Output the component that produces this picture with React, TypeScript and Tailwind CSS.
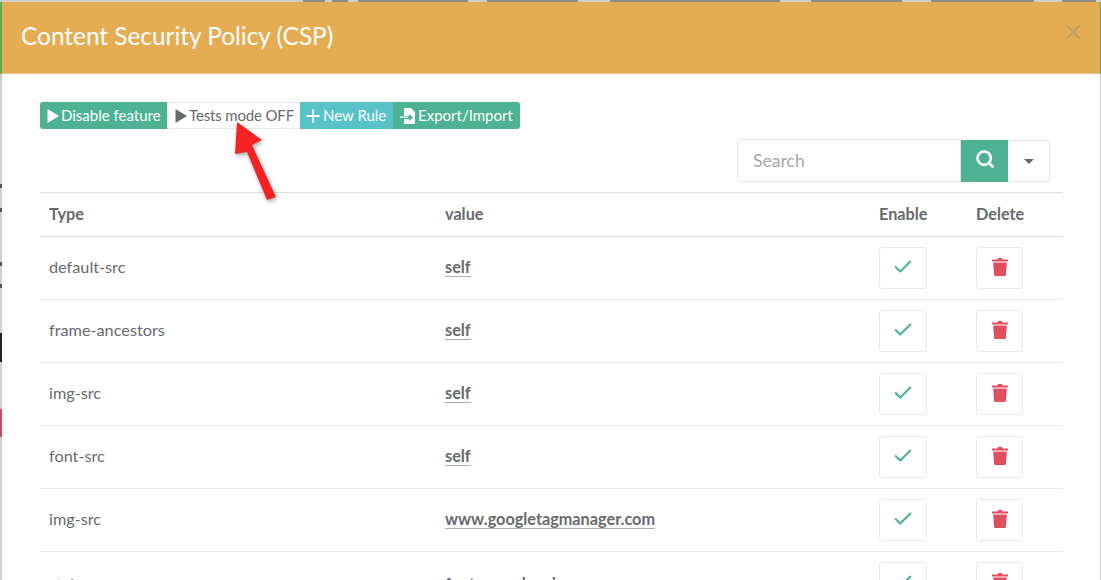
import { Check, Plus, Search, X } from "lucide-react";

const rows = [
  { type: "default-src", value: "self" },
  { type: "frame-ancestors", value: "self" },
  { type: "img-src", value: "self" },
  { type: "font-src", value: "self" },
  { type: "img-src", value: "www.googletagmanager.com" },
  { type: "style-src", value: "fonts.googleapis.com" },
];

// bits of the page behind the modal, along the top edge
const topBits = [
  { left: 303, width: 22 },
  { left: 332, width: 16 },
  { left: 358, width: 110 },
  { left: 487, width: 91 },
  { left: 610, width: 170 },
  { left: 811, width: 91 },
  { left: 931, width: 103 },
  { left: 1062, width: 34 },
];

const Play = ({ className }: { className: string }) => (
  <svg viewBox="0 0 12 14" className={className} fill="currentColor">
    <path d="M0.5 0 L12 7 L0.5 14 Z" />
  </svg>
);

const FileImport = () => (
  <svg viewBox="0 0 16 16" className="mr-[2px] h-4 w-4" fill="white">
    <path d="M4 0h7l4 4v12H4v-5h5v2l4-3.5L9 6v2H4z" />
    <path d="M0 8.6h8v1.2H0z" />
  </svg>
);

const Bin = () => (
  <svg viewBox="0 0 16 18" className="mb-[2px] h-[18px] w-4" fill="#e04f5f">
    <path d="M5.5 1.5 6 0h4l.5 1.5H16v2H0v-2z" />
    <path d="M1.2 4.6h13.6L14 16.5a1.5 1.5 0 0 1-1.5 1.5h-9A1.5 1.5 0 0 1 2 16.5z" />
  </svg>
);

const App = () => {
  return (
    <div className="relative h-[580px] w-[1101px] overflow-hidden bg-[#cfcfcf] pt-[2px] pl-[2px] pr-[1px] font-['Lato','Open_Sans',sans-serif] text-[#676a6c]">
      {topBits.map((b, i) => (
        <div key={i} className="absolute top-0 h-[2px] bg-[#8c8c8c]" style={{ left: b.left, width: b.width }} />
      ))}
      <div className="absolute left-0 top-[184px] h-[4px] w-[2px] bg-[#555555]" />
      <div className="absolute left-0 top-[208px] h-[4px] w-[2px] bg-[#555555]" />
      <div className="absolute left-0 top-[262px] h-[4px] w-[2px] bg-[#555555]" />
      <div className="absolute left-0 top-[284px] h-[4px] w-[2px] bg-[#555555]" />
      <div className="absolute left-0 top-[333px] h-[29px] w-[2px] bg-[#222222]" />
      <div className="absolute left-0 top-[409px] h-[28px] w-[2px] bg-[#d1495b]" />
      <div className="absolute left-0 top-[2px] h-[72px] w-[2px] bg-[#5cab52]" />
      <div className="absolute right-0 top-[2px] h-[72px] w-[1px] bg-[#5cab52]" />

      <div className="h-full bg-white">
        <div className="flex h-[72px] items-start justify-between border-b border-[#e5c48c] bg-[#e4ad54] pl-[19px] pr-[15px]">
          <h4 className="mt-[17px] text-[24.4px] leading-[34px] text-white">Content Security Policy (CSP)</h4>
          <X className="mt-[18px] h-6 w-6 text-[#b89a66]" strokeWidth={1.75} />
        </div>

        <div className="px-[38px] pt-[28px]">
          <div className="flex h-[27px] w-fit overflow-hidden rounded-[3px] text-[15px] leading-[27px]">
            <div className="flex w-[127px] items-center bg-[#4cb292] pl-[7px] text-white">
              <Play className="mr-[2px] h-[14px] w-3" />
              Disable feature
            </div>
            <div className="flex w-[133px] items-center border-y border-[#e7eaec] bg-white pl-[8px] tracking-[-0.15px] text-[#676a6c]">
              <Play className="mr-[2px] h-[14px] w-3" />
              Tests mode OFF
            </div>
            <div className="flex w-[93px] items-center bg-[#57c2c8] pl-[3px] text-white">
              <Plus className="h-5 w-5" strokeWidth={2.25} />
              New Rule
            </div>
            <div className="flex w-[127px] items-center bg-[#4cb292] pl-[7px] text-white">
              <FileImport />
              Export/Import
            </div>
          </div>

          <div className="mr-[12px] mt-[10px] flex justify-end">
            <div className="flex h-[43px] w-[224px] items-center rounded-l-[3px] border border-[#e5e6e7] pl-[15px] pt-[2px] text-[17.6px] text-[#a4a6a8]">
              Search
            </div>
            <div className="mt-[1px] flex h-[42px] w-[47px] items-center justify-center bg-[#4cb292]">
              <Search className="mb-[5px] h-5 w-5 text-white" strokeWidth={3.25} />
            </div>
            <div className="mt-[1px] flex h-[42px] w-[42px] items-center justify-center rounded-r-[3px] border border-l-0 border-[#e5e6e7]">
              <div className="mt-[1px] h-0 w-0 border-x-[5px] border-t-[5px] border-x-transparent border-t-[#676a6c]" />
            </div>
          </div>

          <table className="mt-[10px] w-[1023px] table-fixed border-collapse text-[16.25px]">
            <thead>
              <tr className="h-[44px] border-y border-[#dddddd] font-bold">
                <th className="w-[405px] pl-[9px] text-left">Type</th>
                <th className="w-[430px] text-left">value</th>
                <th className="w-[97px] pl-[4px] text-left">Enable</th>
                <th className="pl-[4px] text-left">Delete</th>
              </tr>
            </thead>
            <tbody>
              {rows.map((row, i) => (
                <tr key={i} className="h-[63px] border-b border-[#e7eaec]">
                  <td className={i === 5 ? "pt-[3px] pl-[9px]" : "pb-[2px] pl-[9px]"}>{row.type}</td>
                  <td className={i === 5 ? "pt-[3px]" : "pb-[2px]"}>
                    <span className="border-b border-[#aaaaaa] font-bold">{row.value}</span>
                  </td>
                  <td className="pl-[4px]">
                    <div className="flex h-[42px] w-[48px] items-center justify-center rounded-[3px] border border-[#e7eaec]">
                      <Check className="mb-[2px] h-[22px] w-[22px] text-[#4cb292]" strokeWidth={2.25} />
                    </div>
                  </td>
                  <td className="pl-[4px]">
                    <div className="flex h-[42px] w-[47px] items-center justify-center rounded-[3px] border border-[#e7eaec]">
                      <Bin />
                    </div>
                  </td>
                </tr>
              ))}
            </tbody>
          </table>
        </div>
      </div>

      {/* red annotation arrow */}
      <svg
        className="absolute left-[230px] top-[118px] h-[90px] w-[60px] drop-shadow-[1px_2px_2px_rgba(0,0,0,0.35)]"
        viewBox="0 0 60 90"
      >
        <path d="M7 4 L32 22 L22 27 L46 79 L37 82 L17 34 L5 36 Z" fill="#f42222" />
      </svg>
    </div>
  );
};

export default App;
